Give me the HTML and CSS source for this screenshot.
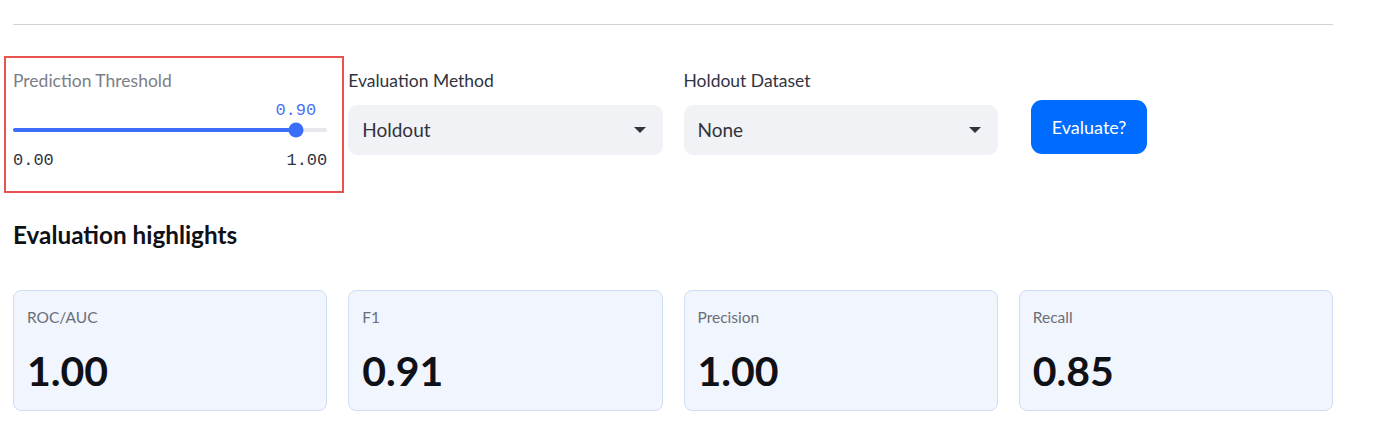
FILE: index.html
```html
<!DOCTYPE html>
<html>
<head>
<meta charset="utf-8">
<link rel="stylesheet" href="styles.css">
</head>
<body>
<div class="page">
  <hr class="divider">
  <div class="controls">
    <div class="col slider-col">
      <div class="highlight"></div>
      <div class="label muted">Prediction Threshold</div>
      <div class="slider">
        <div class="slider-value-row"><span class="slider-value" style="left: 90%">0.90</span></div>
        <div class="track"><div class="fill" style="width: 90%"></div><div class="thumb" style="left: 90%"></div></div>
        <div class="ticks"><span>0.00</span><span>1.00</span></div>
      </div>
    </div>
    <div class="col">
      <div class="label">Evaluation Method</div>
      <div class="select"><span>Holdout</span><span class="caret"></span></div>
    </div>
    <div class="col">
      <div class="label">Holdout Dataset</div>
      <div class="select"><span>None</span><span class="caret"></span></div>
    </div>
    <div class="col button-col">
      <button class="btn">Evaluate?</button>
    </div>
  </div>
  <h2 class="heading">Evaluation highlights</h2>
  <div class="metrics">
    <div class="card"><div class="metric-label">ROC/AUC</div><div class="metric-value">1.00</div></div>
    <div class="card"><div class="metric-label">F1</div><div class="metric-value">0.91</div></div>
    <div class="card"><div class="metric-label">Precision</div><div class="metric-value">1.00</div></div>
    <div class="card"><div class="metric-label">Recall</div><div class="metric-value">0.85</div></div>
  </div>
</div>
</body>
</html>
```
FILE: styles.css
```css
* { box-sizing: border-box; }
html, body { margin: 0; background: #fff; }
body { font-family: "Lato", "Noto Sans", sans-serif; color: #31333f; }
.page { width: 1320px; margin-left: 13px; }
.divider { border: 0; border-top: 1px solid #d3d3d6; margin: 24px 0 0 0; height: 0; }
.controls { display: grid; grid-template-columns: repeat(4, 1fr); column-gap: 21px; margin-top: 45px; }
.col { position: relative; }
.highlight { position: absolute; left: -9px; right: -17px; top: -14px; bottom: -23px; border: 2px solid #e8524f; pointer-events: none; }
.label { font-size: 17.5px; line-height: 22px; height: 22px; color: #31333f; }
.label.muted { color: #7b7e88; }
.select { margin-top: 13px; height: 50px; background: #f0f2f6; border-radius: 9px; display: flex; align-items: center; justify-content: space-between; padding: 0 17px 0 14px; font-size: 19px; line-height: 24px; color: #31333f; }
.select span:first-child { margin-top: -1px; }
.caret { width: 0; height: 0; border-left: 6px solid transparent; border-right: 6px solid transparent; border-top: 6px solid #31333f; }
.slider { padding-top: 11px; }
.slider-value-row { position: relative; height: 16px; }
.slider-value { position: absolute; transform: translateX(-50%); top: 0; font-family: "Liberation Mono", monospace; font-size: 17px; line-height: 16px; color: #4a72f5; }
.track { position: relative; height: 4px; margin-top: 9px; background: #e6e8ee; border-radius: 2px; }
.fill { height: 4px; background: #3b6ef8; border-radius: 2px; }
.thumb { position: absolute; top: 50%; width: 15px; height: 15px; border-radius: 50%; background: #3b6ef8; transform: translate(-50%, -50%); }
.ticks { display: flex; justify-content: space-between; margin-top: 20px; font-family: "Liberation Mono", monospace; font-size: 17px; line-height: 18px; color: #31333f; }
.button-col { display: flex; align-items: flex-start; padding-left: 12px; padding-top: 31px; }
.btn { height: 54px; padding: 0 21px; margin-top: -1px; border: 0; border-radius: 11px; background: #006bff; color: #fff; font-family: inherit; font-size: 18px; }
.heading { margin: 50px 0 0 0; font-size: 24.3px; line-height: 30px; font-weight: 700; color: #0f1117; }
.metrics { display: grid; grid-template-columns: repeat(4, 1fr); column-gap: 21px; margin-top: 40px; }
.card { height: 121px; background: #f0f5fe; border: 1px solid #cfddf5; border-radius: 8px; padding: 16px 13px 0 13px; }
.metric-label { font-size: 15.5px; line-height: 20px; color: #6b6e78; }
.metric-value { margin-top: 19px; font-size: 41px; line-height: 50px; font-weight: 700; color: #0f1117; }
```
